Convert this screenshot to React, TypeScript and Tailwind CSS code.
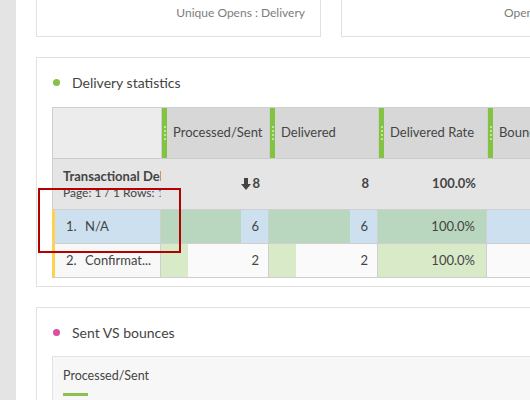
import { ReactNode } from 'react'

const FONT = { fontFamily: 'Lato, "Noto Sans", sans-serif' }

function Grip() {
  return (
    <div className="w-[5px] h-full bg-[#82c341] flex flex-col items-center justify-center gap-[2px] shrink-0">
      {[0, 1, 2, 3].map(i => (
        <div key={i} className="w-[2px] h-[2px] rounded-full bg-[#d8ecc4]" />
      ))}
    </div>
  )
}

function HeadCell({ label, width }: { label: string; width: string }) {
  return (
    <div className={`${width} h-full flex items-center border-l border-[#cfcfcf] bg-[#d7d7d7] shrink-0 overflow-hidden`}>
      <Grip />
      <span className="pl-[6px] text-[13px] text-[#444] whitespace-nowrap">{label}</span>
    </div>
  )
}

function BarCell({ value, total, fill, rest, width }: { value: string; total: number; fill: string; rest: string; width: string }) {
  const pct = (parseFloat(value) / total) * 100
  return (
    <div className={`${width} h-full relative border-l border-[#cfcfcf] shrink-0 ${rest}`}>
      <div className={`absolute left-0 top-0 bottom-0 ${fill}`} style={{ width: `${pct}%` }} />
      <div className="relative h-full flex items-center justify-end pr-[9px] text-[13px] text-[#444]">{value}</div>
    </div>
  )
}

function Dot({ color }: { color: string }) {
  return <div className={`w-[7px] h-[7px] rounded-full ${color}`} />
}

function Card({ children, className = '' }: { children: ReactNode; className?: string }) {
  return <div className={`border border-[#e1e1e1] bg-white ${className}`}>{children}</div>
}

export default function App() {
  return (
    <div className="w-[530px] h-[400px] overflow-hidden flex bg-white relative" style={FONT}>
      <div className="w-4 shrink-0 bg-[#e4e4e4]" />
      <div className="pl-5 w-[640px] shrink-0">
        {/* top metric cards */}
        <div className="flex gap-5">
          <div className="w-[285px] h-[37px] border-x border-b border-[#e1e1e1] flex justify-end items-start pt-[4px] pr-[15px]">
            <span className="text-[12px] text-[#7d7d7d]">Unique Opens : Delivery</span>
          </div>
          <div className="w-[285px] h-[37px] border-x border-b border-[#e1e1e1] flex items-start pt-[4px] pl-[162px]">
            <span className="text-[12px] text-[#7d7d7d] whitespace-nowrap">Opens : Delivery</span>
          </div>
        </div>

        {/* delivery statistics */}
        <Card className="mt-5 h-[230px] pl-[15px]">
          <div className="flex items-center gap-[12px] h-[20px] mt-[14px] pl-[1px]">
            <Dot color="bg-[#86c046]" />
            <span className="text-[14px] text-[#444]">Delivery statistics</span>
          </div>
          <div className="mt-[15px] border-t border-l border-[#cfcfcf]">
            <div className="flex h-[51px] border-b border-[#cbcbcb]">
              <div className="w-[108px] h-full bg-[#ececec] shrink-0" />
              <HeadCell label="Processed/Sent" width="w-[108px]" />
              <HeadCell label="Delivered" width="w-[109px]" />
              <HeadCell label="Delivered Rate" width="w-[109px]" />
              <HeadCell label="Bounces" width="w-[109px]" />
            </div>
            <div className="flex h-[51px] bg-[#e5e5e5] border-b border-[#cfcfcf] text-[#444]">
              <div className="w-[108px] shrink-0 pl-[10px] flex flex-col justify-center overflow-hidden">
                <div className="text-[13px] font-bold leading-[16px] whitespace-nowrap">Transactional Delivery</div>
                <div className="text-[12px] leading-[17px] whitespace-nowrap">Page: 1 / 1 Rows: <span className="text-[#2d7fd2]">10</span></div>
              </div>
              <div className="w-[108px] shrink-0 flex items-center justify-end pr-[9px] text-[13px] font-bold gap-[1px]">
                <svg width="10" height="12" viewBox="0 0 10 12">
                  <path d="M3 0h4v6h3L5 12 0 6h3z" fill="#444" />
                </svg>
                8
              </div>
              <div className="w-[109px] shrink-0 flex items-center justify-end pr-[9px] text-[13px] font-bold">8</div>
              <div className="w-[109px] shrink-0 flex items-center justify-end pr-[11px] text-[13px] font-bold">100.0%</div>
              <div className="w-[109px] shrink-0" />
            </div>
            <div className="flex h-[34px] border-b border-[#cfcfcf]">
              <div className="w-[108px] shrink-0 bg-[#cde0ef] border-l-[3px] border-[#fcd24f] -ml-px flex items-center text-[13px] text-[#444] pl-[11px]">
                <span className="w-[19px]">1.</span>N/A
              </div>
              <BarCell value="6" total={8} fill="bg-[#b9d6bf]" rest="bg-[#cde0ef]" width="w-[108px]" />
              <BarCell value="6" total={8} fill="bg-[#b9d6bf]" rest="bg-[#cde0ef]" width="w-[109px]" />
              <div className="w-[109px] shrink-0 border-l border-[#cfcfcf] bg-[#b9d6bf] flex items-center justify-end pr-[11px] text-[13px] text-[#444]">100.0%</div>
              <div className="w-[109px] shrink-0 border-l border-[#cfcfcf] bg-[#cde0ef]" />
            </div>
            <div className="flex h-[34px] border-b border-[#cfcfcf]">
              <div className="w-[108px] shrink-0 bg-[#f8f8f8] border-l-[3px] border-[#fcd24f] -ml-px flex items-center text-[13px] text-[#444] pl-[11px] whitespace-nowrap overflow-hidden">
                <span className="w-[19px]">2.</span>Confirmat...
              </div>
              <BarCell value="2" total={8} fill="bg-[#d9eac8]" rest="bg-[#fafafa]" width="w-[108px]" />
              <BarCell value="2" total={8} fill="bg-[#d9eac8]" rest="bg-[#fafafa]" width="w-[109px]" />
              <div className="w-[109px] shrink-0 border-l border-[#cfcfcf] bg-[#d9eac8] flex items-center justify-end pr-[11px] text-[13px] text-[#444]">100.0%</div>
              <div className="w-[109px] shrink-0 border-l border-[#cfcfcf] bg-[#fafafa]" />
            </div>
          </div>
        </Card>

        {/* sent vs bounces */}
        <Card className="mt-5 h-[120px] pl-[15px]">
          <div className="flex items-center gap-[12px] h-[20px] mt-[14px] pl-[1px]">
            <Dot color="bg-[#d9509f]" />
            <span className="text-[14px] text-[#444]">Sent VS bounces</span>
          </div>
          <div className="mt-[14px] border border-[#e3e3e3] bg-[#f7f7f7] h-[80px] pl-[10px] pt-[10px]">
            <div className="text-[12.5px] text-[#444] leading-[18px]">Processed/Sent</div>
            <div className="mt-[8px] w-[25px] h-[3px] bg-[#8cc152]" />
          </div>
        </Card>
      </div>

      {/* annotation */}
      <div className="absolute left-[38px] top-[188px] w-[143px] h-[65px] border-2 border-[#b40000]" />
    </div>
  )
}
